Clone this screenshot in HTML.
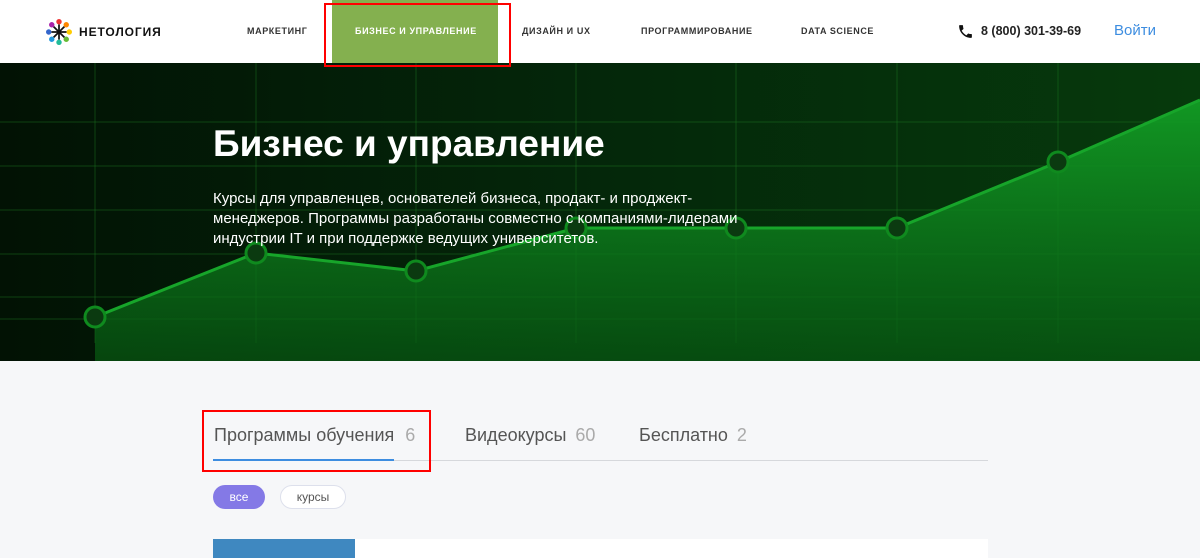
<!DOCTYPE html>
<html><head><meta charset="utf-8"><style>
*{margin:0;padding:0;box-sizing:border-box}
body{width:1200px;height:558px;overflow:hidden;background:#f6f7f9;font-family:"Liberation Sans",sans-serif;position:relative}
.hdr{position:absolute;left:0;top:0;width:1200px;height:63px;background:#fff}
.nav{position:absolute;top:26px;font-size:9px;letter-spacing:0.6px;color:#333;font-weight:bold}
.hero{position:absolute;left:0;top:63px;width:1200px;height:298px;overflow:hidden;background:linear-gradient(90deg,#021204 0%,#04270a 50%,#063a0c 100%)}
.red{position:absolute;border:2px solid #f00}
</style></head><body>
<div class="hdr">
<svg style="position:absolute;left:46px;top:19px" width="26" height="26" viewBox="0 0 24 24">
<g stroke="#111" stroke-width="1.6"><line x1="12" y1="5" x2="12" y2="19"/><line x1="5" y1="12" x2="19" y2="12"/><line x1="7" y1="7" x2="17" y2="17"/><line x1="17" y1="7" x2="7" y2="17"/></g>
<circle cx="12" cy="2.5" r="2.5" fill="#e33"/><circle cx="18.7" cy="5.3" r="2.5" fill="#f80"/><circle cx="21.5" cy="12" r="2.5" fill="#fc0"/><circle cx="18.7" cy="18.7" r="2.5" fill="#6b3"/><circle cx="12" cy="21.5" r="2.5" fill="#2b9"/><circle cx="5.3" cy="18.7" r="2.5" fill="#29d"/><circle cx="2.5" cy="12" r="2.5" fill="#36c"/><circle cx="5.3" cy="5.3" r="2.5" fill="#a2a"/>
</svg>
<div style="position:absolute;left:79px;top:25px;font-size:12px;font-weight:bold;letter-spacing:0.9px;color:#111">НЕТОЛОГИЯ</div>
<div class="nav" style="left:247px">МАРКЕТИНГ</div>
<div style="position:absolute;left:332px;top:0;width:166px;height:63px;background:#84b04f"></div>
<div class="nav" style="left:355px;color:#fff">БИЗНЕС И УПРАВЛЕНИЕ</div>
<div class="nav" style="left:522px">ДИЗАЙН И UX</div>
<div class="nav" style="left:641px">ПРОГРАММИРОВАНИЕ</div>
<div class="nav" style="left:801px">DATA SCIENCE</div>
<svg style="position:absolute;left:957px;top:23px" width="17" height="17" viewBox="0 0 24 24"><path d="M6.6 10.8c1.4 2.8 3.8 5.1 6.6 6.6l2.2-2.2c.3-.3.7-.4 1-.2 1.1.4 2.3.6 3.6.6.6 0 1 .4 1 1V20c0 .6-.4 1-1 1C10.6 21 3 13.4 3 4c0-.6.4-1 1-1h3.5c.6 0 1 .4 1 1 0 1.3.2 2.5.6 3.6.1.3 0 .7-.2 1z" fill="#111"/></svg>
<div style="position:absolute;left:981px;top:24px;font-size:12.5px;font-weight:bold;color:#222">8 (800) 301-39-69</div>
<div style="position:absolute;left:1114px;top:22px;font-size:15px;color:#3d8de0">Войти</div>
</div>
<div class="hero">
<svg width="1200" height="298" style="position:absolute;left:0;top:0">
<defs><linearGradient id="f" x1="0" y1="0" x2="0" y2="1"><stop offset="0" stop-color="#13a226" stop-opacity=".9"/><stop offset="1" stop-color="#075a12" stop-opacity=".7"/></linearGradient></defs>
<g stroke="#1c7a22" stroke-opacity=".45" stroke-width="1">
<line x1="95" y1="0" x2="95" y2="280"/><line x1="256" y1="0" x2="256" y2="280"/><line x1="416" y1="0" x2="416" y2="280"/><line x1="576" y1="0" x2="576" y2="280"/><line x1="736" y1="0" x2="736" y2="280"/><line x1="897" y1="0" x2="897" y2="280"/><line x1="1058" y1="0" x2="1058" y2="280"/>
<line x1="0" y1="59" x2="1200" y2="59"/><line x1="0" y1="103" x2="1200" y2="103"/><line x1="0" y1="147" x2="1200" y2="147"/><line x1="0" y1="191" x2="1200" y2="191"/><line x1="0" y1="234" x2="1200" y2="234"/><line x1="0" y1="256" x2="1200" y2="256"/>
</g>
<path d="M95 254 L256 190 L416 208 L576 165 L736 165 L897 165 L1058 99 L1200 37 L1200 298 L95 298Z" fill="url(#f)"/>
<path d="M95 254 L256 190 L416 208 L576 165 L736 165 L897 165 L1058 99 L1200 37" fill="none" stroke="#17a52a" stroke-width="3"/>
<g fill="#0b3a10" stroke="#0f8a1e" stroke-width="3"><circle cx="95" cy="254" r="10"/><circle cx="256" cy="190" r="10"/><circle cx="416" cy="208" r="10"/><circle cx="576" cy="165" r="10"/><circle cx="736" cy="165" r="10"/><circle cx="897" cy="165" r="10"/><circle cx="1058" cy="99" r="10"/></g>
</svg>
<div style="position:absolute;left:213px;top:60px;font-size:37px;font-weight:bold;color:#fff">Бизнес и управление</div>
<div style="position:absolute;left:213px;top:126px;width:530px;font-size:15px;line-height:20px;color:#fff">Курсы для управленцев, основателей бизнеса, продакт- и проджект-менеджеров. Программы разработаны совместно с компаниями-лидерами индустрии IT и при поддержке ведущих университетов.</div>
</div>
<div style="position:absolute;left:213px;top:460px;width:775px;height:1px;background:#d6d8dc"></div>
<div style="position:absolute;left:213px;top:459px;width:181px;height:2px;background:#3d8de0"></div>
<div style="position:absolute;left:214px;top:425px;font-size:18px;color:#555">Программы обучения <span style="color:#aaa;margin-left:6px">6</span></div>
<div style="position:absolute;left:465px;top:425px;font-size:18px;color:#555">Видеокурсы <span style="color:#aaa;margin-left:4px">60</span></div>
<div style="position:absolute;left:639px;top:425px;font-size:18px;color:#555">Бесплатно <span style="color:#aaa;margin-left:4px">2</span></div>
<div style="position:absolute;left:213px;top:485px;width:52px;height:24px;border-radius:12px;background:#8479e6;color:#fff;font-size:12px;text-align:center;line-height:24px">все</div>
<div style="position:absolute;left:280px;top:485px;width:66px;height:24px;border-radius:12px;border:1px solid #dde0ec;background:#fff;color:#555;font-size:12px;text-align:center;line-height:22px">курсы</div>
<div style="position:absolute;left:213px;top:539px;width:142px;height:19px;background:#3f88c0"></div>
<div style="position:absolute;left:355px;top:539px;width:633px;height:19px;background:#fff"></div>
<div class="red" style="left:324px;top:3px;width:187px;height:64px"></div>
<div class="red" style="left:202px;top:410px;width:229px;height:62px"></div>
</body></html>
